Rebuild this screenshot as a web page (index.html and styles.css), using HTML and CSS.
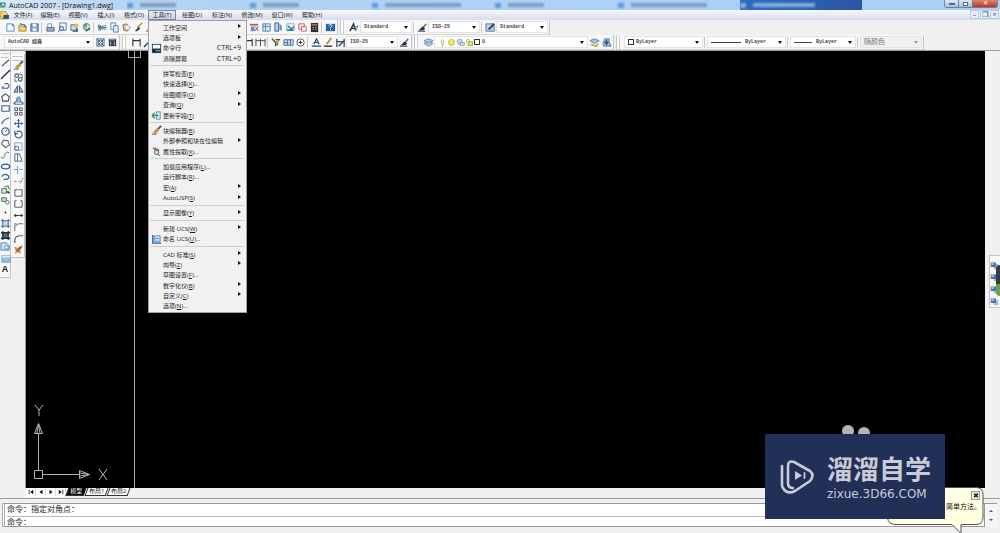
FILE: index.html
```html
<!DOCTYPE html>
<html lang="zh-CN">
<head>
<meta charset="utf-8">
<title>AutoCAD 2007 - [Drawing1.dwg]</title>
<link rel="stylesheet" href="styles.css">
</head>
<body>
<svg class="sprite" aria-hidden="true">
  <symbol id="new" viewBox="0 0 12 12"><path d="M2 2h6l2 2v6H2z" fill="#f4faff" stroke="#5f8fc0"/><path d="M8 2v2h2" fill="none" stroke="#335f90"/></symbol>
  <symbol id="open" viewBox="0 0 12 12"><path d="M2 4h3l1 1h4v5H2z" fill="#efd268" stroke="#b58b2b"/><path d="M3 2l5 1 2 3" fill="none" stroke="#3c79b9" stroke-width="1.5"/></symbol>
  <symbol id="save" viewBox="0 0 12 12"><path d="M2 2h8v8H2z" fill="#7fabd8" stroke="#2f6299"/><path d="M4 2h4v3H4zM4 7h4v3H4z" fill="#f3f8ff"/></symbol>
  <symbol id="print" viewBox="0 0 12 12"><path d="M3 2h4v4H3z" fill="#fff" stroke="#7994b4"/><path d="M2 6h8v4H2z" fill="#91add0" stroke="#526f96"/></symbol>
  <symbol id="preview" viewBox="0 0 12 12"><path d="M3 1h7v8H3z" fill="#eef6ff" stroke="#4778ad"/><circle cx="5" cy="7" r="2.2" fill="#cfe3fa" stroke="#335b88"/><path d="M3 9l-2 2" stroke="#335b88"/></symbol>
  <symbol id="publish" viewBox="0 0 12 12"><path d="M2 3h6v6H2z" fill="#c9dbef" stroke="#416e9f"/><circle cx="8" cy="4" r="2.5" fill="#e5bb55"/><path d="M4 10h5V7" fill="none" stroke="#285482" stroke-width="1.5"/></symbol>
  <symbol id="globe" viewBox="0 0 12 12"><circle cx="6" cy="5" r="4" fill="#58a277"/><path d="M2 4l4 2 1-4 3 3-3 4-2-2" fill="#c9ddef"/><path d="M5 10l5-3" stroke="#394f68" stroke-width="1.5"/></symbol>
  <symbol id="cut" viewBox="0 0 12 12"><path d="M1 6h10M3 5l7-1M4 7l6 1" stroke="#496f9b"/><circle cx="2.5" cy="4.5" r="1.2" fill="none" stroke="#355987"/><circle cx="3" cy="8" r="1.2" fill="none" stroke="#355987"/></symbol>
  <symbol id="copy" viewBox="0 0 12 12"><path d="M2 1h5v7H2z" fill="#fff" stroke="#4d80b5"/><path d="M5 4h5v7H5z" fill="#e1effd" stroke="#4d80b5"/></symbol>
  <symbol id="paste" viewBox="0 0 12 12"><path d="M2 3l4-1 4 4-3 4-4-1z" fill="#cbbf91" stroke="#807654"/><path d="M5 4h4v4H5z" fill="#edf5ff"/></symbol>
  <symbol id="brush" viewBox="0 0 12 12"><path d="M10 1L5 6" stroke="#d8a63b" stroke-width="2"/><path d="M6 5L2 10h3l3-3z" fill="#454e58"/></symbol>
  <symbol id="undo" viewBox="0 0 12 12"><path d="M2 5h6q3 2 0 4M2 5l3-3M2 5l3 3" fill="none" stroke="#2d62a0"/></symbol>
  <symbol id="props" viewBox="0 0 12 12"><path d="M2 2h8v8H2z" fill="#dceafa" stroke="#4f7fae"/><path d="M2 5h8M5 2v8" stroke="#4f7fae"/></symbol>
  <symbol id="center" viewBox="0 0 12 12"><path d="M1 2h9v2H1z" fill="#c15b66"/><path d="M2 5h4v5H2z" fill="#5a91c6"/><path d="M6 10l4-5M7 5l3 5" stroke="#853b70"/></symbol>
  <symbol id="palette" viewBox="0 0 12 12"><path d="M2 1h4v9H2z" fill="#b7d4ee" stroke="#376695"/><path d="M7 2q3 1 3 7H7z" fill="#6897c3"/></symbol>
  <symbol id="sheet" viewBox="0 0 12 12"><path d="M2 2h8v7H2z" fill="#f3fbff" stroke="#77a6be"/><path d="M3 4l4 4 3-3M2 9h7" fill="none" stroke="#247799" stroke-width="1.5"/></symbol>
  <symbol id="markup" viewBox="0 0 12 12"><path d="M2 2h6v6H2z" fill="#fbe9e9" stroke="#c65e65"/><path d="M5 5h5v5H5z" fill="#fff" stroke="#bd5962"/></symbol>
  <symbol id="calc" viewBox="0 0 12 12"><path d="M2 1h8v10H2z" fill="#342d2f"/><path d="M3 2h6v2H3z" fill="#b9675c"/><path d="M4 6h1m2 0h1M4 8h1m2 0h1" stroke="#eee"/></symbol>
  <symbol id="help" viewBox="0 0 12 12"><path d="M1 2h10v8H1z" fill="#2467a1"/><path d="M4 4q3-3 4 0L6 6v1M6 8v1" fill="none" stroke="#fff"/></symbol>
  <symbol id="astyle" viewBox="0 0 12 12"><path d="M1 10L5 2l2 7M2 7h5" fill="none" stroke="#263440" stroke-width="1.5"/><path d="M6 6l4-2-3 6" fill="none" stroke="#5c7590"/></symbol>
  <symbol id="dstyle" viewBox="0 0 12 12"><path d="M1 10h8M10 2L6 7" fill="none" stroke="#40576c" stroke-width="1.4"/><path d="M6 5L2 9h5l2-2z" fill="#263544"/></symbol>
  <symbol id="tstyle" viewBox="0 0 12 12"><path d="M1 2h9v8H1z" fill="#bdd3e9" stroke="#507698"/><path d="M10 2L4 8" stroke="#263f5d" stroke-width="2"/></symbol>
  <symbol id="gear" viewBox="0 0 12 12"><path d="M2 2h8v8H2z" fill="#c3d8ec" stroke="#577895"/><circle cx="6" cy="6" r="2.5" fill="#fff" stroke="#43566a"/><path d="M2 2l8 8M2 10l8-8" stroke="#526c87"/></symbol>
  <symbol id="darkset" viewBox="0 0 12 12"><path d="M2 2h8v8H2z" fill="#343d48"/><path d="M3 3h6M4 5v4M8 5v4" stroke="#aabac8"/></symbol>
  <symbol id="dim" viewBox="0 0 12 12"><path d="M2 2v8M10 2v8M2 4h8" fill="none" stroke="#333" stroke-width="1.2"/></symbol>
  <symbol id="dimcont" viewBox="0 0 12 12"><path d="M1 2v8M6 2v8M11 2v8M1 4h10" stroke="#344252" fill="none"/></symbol>
  <symbol id="leader" viewBox="0 0 12 12"><path d="M1 2l4 4v4M5 3h5M7 3v6" stroke="#434d43" stroke-width="1.5" fill="none"/><circle cx="7" cy="5" r="2" fill="#c9ad44"/></symbol>
  <symbol id="tol" viewBox="0 0 12 12"><path d="M1 3h10v6H1z" fill="#c9e0f4" stroke="#3b6a9c"/><path d="M5 3v6M8 3v6M1 6h4" stroke="#3b6a9c"/></symbol>
  <symbol id="target" viewBox="0 0 12 12"><circle cx="6" cy="6" r="4" fill="#fff" stroke="#555"/><path d="M6 4v4M4 6h4" stroke="#222"/></symbol>
  <symbol id="dimedit" viewBox="0 0 12 12"><path d="M3 8l3-6 3 6M4 6h4M1 10h10" fill="none" stroke="#234876" stroke-width="1.3"/></symbol>
  <symbol id="dimtext" viewBox="0 0 12 12"><path d="M1 10h9" stroke="#333" stroke-width="1.5"/><path d="M9 1L4 8" stroke="#b28d3b" stroke-width="2"/></symbol>
  <symbol id="dimupd" viewBox="0 0 12 12"><path d="M2 2v9M10 2v9M2 5h8" fill="none" stroke="#234876" stroke-width="1.3"/><path d="M10 4L4 10" stroke="#444" stroke-width="1.5"/></symbol>
  <symbol id="layers" viewBox="0 0 12 12"><path d="M1 4l5-2 5 2-5 3zM1 7l5 3 5-3-5-2z" fill="#b9cfe7" stroke="#688fb6"/></symbol>
  <symbol id="bulb" viewBox="0 0 12 12"><path d="M5 9V7q-3-3 1-5 4 2 1 5v2z" fill="#fff9b5" stroke="#b3a44e"/><path d="M5 11h2" stroke="#888"/></symbol>
  <symbol id="sun" viewBox="0 0 12 12"><circle cx="6" cy="6" r="4" fill="#f5ee58" stroke="#a5a144"/></symbol>
  <symbol id="freeze" viewBox="0 0 12 12"><circle cx="5" cy="5" r="3.5" fill="#bdd8ef" stroke="#7697b8"/><path d="M6 6h5v4H6z" fill="#dce5ee" stroke="#7889a0"/></symbol>
  <symbol id="lock" viewBox="0 0 12 12"><path d="M2 6V3q2-3 4 0v3" fill="none" stroke="#9fae31"/><path d="M4 5h6v5H4z" fill="#e9e654" stroke="#929a36"/></symbol>
  <symbol id="layprev" viewBox="0 0 12 12"><path d="M1 4l5-2 5 2-5 3z" fill="#a6c4dc" stroke="#607f9f"/><path d="M2 8l6 2 2-3" fill="none" stroke="#c0b23e" stroke-width="2"/></symbol>
  <symbol id="laystate" viewBox="0 0 12 12"><path d="M4 2h5v3l2 5H3L2 7z" fill="#9fbbdb" stroke="#607fa6"/><path d="M6 3v4M4 5l2 3 2-3" fill="none" stroke="#245b92" stroke-width="1.5"/></symbol>

  <symbol id="line" viewBox="0 0 12 12"><path d="M2 10l8-7" stroke="#3b5069" stroke-width="1.2"/></symbol>
  <symbol id="xline" viewBox="0 0 12 12"><path d="M1 11L11 1" stroke="#24364c" stroke-width="1.5"/></symbol>
  <symbol id="pline" viewBox="0 0 12 12"><path d="M2 9h6q4-3 0-5H5M2 9l2-2" fill="none" stroke="#356596" stroke-width="1.2"/></symbol>
  <symbol id="poly" viewBox="0 0 12 12"><path d="M6 2l4 3-1 5H3L2 5z" fill="none" stroke="#49515b" stroke-width="1.2"/></symbol>
  <symbol id="rect" viewBox="0 0 12 12"><path d="M2 3h8v6H2z" fill="none" stroke="#41678e" stroke-width="1.2"/></symbol>
  <symbol id="arc" viewBox="0 0 12 12"><path d="M2 10q1-5 8-7" fill="none" stroke="#315d8b" stroke-width="1.3"/></symbol>
  <symbol id="circle" viewBox="0 0 12 12"><circle cx="6" cy="6" r="4" fill="none" stroke="#38618e" stroke-width="1.3"/><path d="M6 6l2-2" stroke="#333"/></symbol>
  <symbol id="cloud" viewBox="0 0 12 12"><path d="M3 8q-3-2 0-3 0-4 3-2 4-1 3 2 3 3-1 4-2 3-3 0z" fill="none" stroke="#5b6574" stroke-width="1.2"/></symbol>
  <symbol id="spline" viewBox="0 0 12 12"><path d="M1 9q3 3 4-2t5-3" fill="none" stroke="#566272"/></symbol>
  <symbol id="ellipse" viewBox="0 0 12 12"><ellipse cx="6" cy="6" rx="4.5" ry="2.6" fill="none" stroke="#275c98" stroke-width="1.3"/></symbol>
  <symbol id="earc" viewBox="0 0 12 12"><path d="M2 5q3-4 7-1 2 3-2 4H4" fill="none" stroke="#275c98" stroke-width="1.3"/></symbol>
  <symbol id="insert" viewBox="0 0 12 12"><path d="M2 5h5v5H2zM5 3l4-1 1 4" fill="#d8eadd" stroke="#417557"/><path d="M8 8l2 2" stroke="#222" stroke-width="2"/></symbol>
  <symbol id="block" viewBox="0 0 12 12"><path d="M2 3h5v4H2z" fill="#cae4c6" stroke="#3d7349"/><circle cx="8" cy="8" r="2" fill="#fff" stroke="#3d7349"/></symbol>
  <symbol id="point" viewBox="0 0 12 12"><circle cx="6" cy="6" r="1" fill="#222"/></symbol>
  <symbol id="hatch" viewBox="0 0 12 12"><path d="M3 3h6v6H3z" fill="#cfe3f6"/><path d="M1 3h10M1 9h10M3 1v10M9 1v10" stroke="#3e70a4" stroke-width="1.2"/><path d="M3 7l4-4M5 9l4-4" stroke="#8fb4d9"/></symbol>
  <symbol id="gradient" viewBox="0 0 12 12"><path d="M3 3h6v6H3z" fill="#4a6b86"/><path d="M1 3h10M1 9h10M3 1v10M9 1v10" stroke="#22303c" stroke-width="1.4"/></symbol>
  <symbol id="region" viewBox="0 0 12 12"><path d="M1 2h6l3 3v5H1z" fill="#cfe2f5" stroke="#4c7fb2"/><circle cx="7" cy="7" r="2" fill="#fff" stroke="#4c7fb2"/></symbol>
  <symbol id="table" viewBox="0 0 12 12"><path d="M2 3h9v7H2z" fill="#9dbce2" stroke="#7395be"/><path d="M2 3h9v2H2z" fill="#d9e9fb"/></symbol>

  <symbol id="erase" viewBox="0 0 12 12"><path d="M11 1L7 5" stroke="#555" stroke-width="2"/><path d="M7 3L2 8l3 2 4-4z" fill="#c49d46"/><path d="M1 10h5" stroke="#555"/></symbol>
  <symbol id="dup" viewBox="0 0 12 12"><circle cx="4" cy="4" r="2" fill="none" stroke="#35577b" stroke-width="1.2"/><circle cx="8" cy="8" r="2" fill="none" stroke="#35577b" stroke-width="1.2"/><path d="M6 2l4 1v3M2 7v3h3" fill="none" stroke="#526679"/></symbol>
  <symbol id="mirror" viewBox="0 0 12 12"><path d="M5 3v7H1zM7 3v7h4z" fill="#a9c5e1" stroke="#35577b"/></symbol>
  <symbol id="offset" viewBox="0 0 12 12"><path d="M1 10V8l3-1V4q2-4 4 0v3l3 1v2z" fill="#8eb5de" stroke="#456f9e"/><path d="M3 9h6" stroke="#e8f4ff"/></symbol>
  <symbol id="array" viewBox="0 0 12 12"><path d="M2 2h3v3H2zM7 2h3v3H7zM2 7h3v3H2zM7 7h3v3H7z" fill="none" stroke="#3f4f62"/></symbol>
  <symbol id="move" viewBox="0 0 12 12"><path d="M2 6h8M6 2v8" stroke="#2e66a3" stroke-width="1.3"/><path d="M6 1L4 3h4zM6 11L4 9h4zM1 6l2-2v4zM11 6L9 4v4z" fill="#2e66a3"/></symbol>
  <symbol id="rotate" viewBox="0 0 12 12"><path d="M4 3q5-2 6 2 0 5-4 5-5-1-3-6M2 2v3h3" fill="none" stroke="#325985" stroke-width="1.2"/></symbol>
  <symbol id="scale" viewBox="0 0 12 12"><path d="M2 2h8v8H2z" fill="#eef6ff" stroke="#7ba4cd"/><path d="M2 6h4v4H2z" fill="none" stroke="#54789d"/></symbol>
  <symbol id="stretch" viewBox="0 0 12 12"><path d="M2 2h3v8H2zM5 2h2l3 8H5" fill="none" stroke="#4c6179"/></symbol>
  <symbol id="trim" viewBox="0 0 12 12"><path d="M1 6h4M7 6h4M5 2v9" stroke="#679bc8"/></symbol>
  <symbol id="extend" viewBox="0 0 12 12"><path d="M1 7h3M6 7h2M8 9l3-6" stroke="#738da8"/></symbol>
  <symbol id="break" viewBox="0 0 12 12"><path d="M2 3h8v7H2z" fill="none" stroke="#465365"/><path d="M5 3h2" stroke="#ccd"/></symbol>
  <symbol id="break2" viewBox="0 0 12 12"><path d="M4 3H2v7h8V3H8" fill="none" stroke="#3e546b"/></symbol>
  <symbol id="join" viewBox="0 0 12 12"><path d="M1 6h10" stroke="#333"/><path d="M2 4l3 2-3 2zM10 4L7 6l3 2z" fill="#314355"/></symbol>
  <symbol id="chamfer" viewBox="0 0 12 12"><path d="M2 11V6l4-3h5M2 5V3h2" fill="none" stroke="#526a83"/></symbol>
  <symbol id="fillet" viewBox="0 0 12 12"><path d="M2 11V8q0-5 6-5h3" fill="none" stroke="#31618f" stroke-width="1.3"/></symbol>
  <symbol id="explode" viewBox="0 0 12 12"><path d="M1 3l4 1 6-3-2 4-1 3-3 1-3 2 1-4z" fill="#db894c"/><path d="M4 8l5-5M6 8l2 2" stroke="#8f432d" stroke-width="1.2"/></symbol>
  <symbol id="cmdwin" viewBox="0 0 12 12"><path d="M1 1h10v10H1z" fill="#174b86"/><path d="M2 2h8v4H2z" fill="#fff"/><path d="M2 7h8v3H2z" fill="#152026"/><path d="M5 8h5v1H5z" fill="#e0da7a"/></symbol>
  <symbol id="field" viewBox="0 0 12 12"><path d="M6 2h4v8H6z" fill="#e6f2fb" stroke="#4a91b5"/><path d="M1 6h7M1 6l3-3M1 6l3 3" stroke="#2c9a67" stroke-width="1.4" fill="none"/></symbol>
  <symbol id="extract" viewBox="0 0 12 12"><path d="M2 2l6 5M4 2l5 3" stroke="#b35f75" stroke-width="1.5"/><circle cx="6" cy="7" r="2.5" fill="#c7d6e5" stroke="#556a82"/><path d="M8 9l2 2" stroke="#333"/></symbol>
  <symbol id="ucs" viewBox="0 0 12 12"><path d="M2 1v9h9" fill="none" stroke="#205f9e" stroke-width="1.5"/><path d="M4 2h6v6H4z" fill="#d9eafb" stroke="#4686c1"/><path d="M5 5h4" stroke="#4686c1"/></symbol>
  <symbol id="cube" viewBox="0 0 12 12"><path d="M5 4h6v7H5z" fill="#9dbce0"/><path d="M1 2h7v6H1z" fill="#4a74a6"/><path d="M2 3h3v2H2z" fill="#c4dcf2"/></symbol>
</svg>

<header class="titlebar">
  <svg class="appicon" viewBox="0 0 12 12"><path d="M0 1h11v10H0z" fill="#2f8a77"/><path d="M2 9l4-6 3 6" fill="none" stroke="#e6f5ef" stroke-width="2"/></svg>
  <h1 class="title">AutoCAD 2007 - [Drawing1.dwg]</h1>
  <div class="ghosts" aria-hidden="true">
    <span class="ghost"><i></i><b></b></span><span class="ghost"><i></i><b></b></span><span class="ghost"><i></i><b class="long"></b></span><span class="ghost"><i></i><b></b></span><span class="ghost"><i></i><b class="long"></b></span><span class="ghost active"><i></i><b></b></span>
  </div>
  <div class="winbtns"><button aria-label="最小化"><i class="dash"></i></button><button aria-label="还原"><i class="box"></i></button><button class="close" aria-label="关闭">✕</button></div>
</header>

<nav class="menubar">
  <svg class="docicon" viewBox="0 0 12 12"><path d="M1 1h6l3 3v7H1z" fill="#f3d660" stroke="#a98b2f"/><path d="M5 6h7v5H4z" fill="#31517c"/></svg>
  <button>文件(F)</button><button>编辑(E)</button><button>视图(V)</button><button>插入(I)</button><button>格式(O)</button>
  <div class="menuhost">
    <button class="open" aria-expanded="true">工具(T)</button>
    <div class="menu" role="menu">
      <button class="sub">工作空间</button>
      <button class="sub">选项板</button>
      <button><svg><use href="#cmdwin"/></svg>命令行<kbd>CTRL+9</kbd></button>
      <button>清除屏幕<kbd>CTRL+0</kbd></button>
      <hr>
      <button>拼写检查(<u>E</u>)</button>
      <button>快速选择(<u>K</u>)...</button>
      <button class="sub">绘图顺序(<u>O</u>)</button>
      <button class="sub">查询(<u>Q</u>)</button>
      <button><svg><use href="#field"/></svg>更新字段(<u>T</u>)</button>
      <hr>
      <button><svg><use href="#erase"/></svg>块编辑器(<u>B</u>)</button>
      <button class="sub">外部参照和块在位编辑</button>
      <button><svg><use href="#extract"/></svg>属性提取(<u>X</u>)...</button>
      <hr>
      <button>加载应用程序(<u>L</u>)...</button>
      <button>运行脚本(<u>R</u>)...</button>
      <button class="sub">宏(<u>A</u>)</button>
      <button class="sub">AutoLISP(<u>S</u>)</button>
      <hr>
      <button class="sub">显示图像(<u>Y</u>)</button>
      <hr>
      <button class="sub">新建 UCS(<u>W</u>)</button>
      <button><svg><use href="#ucs"/></svg>命名 UCS(<u>U</u>)...</button>
      <hr>
      <button class="sub">CAD 标准(<u>S</u>)</button>
      <button class="sub">向导(<u>Z</u>)</button>
      <button>草图设置(<u>F</u>)...</button>
      <button class="sub">数字化仪(<u>B</u>)</button>
      <button class="sub">自定义(<u>C</u>)</button>
      <button>选项(<u>N</u>)...</button>
    </div>
  </div>
  <button>绘图(D)</button><button>标注(N)</button><button>修改(M)</button><button>窗口(W)</button><button>帮助(H)</button>
  <div class="docbtns"><button aria-label="最小化文档">–</button><button aria-label="还原文档">❐</button><button aria-label="关闭文档">×</button></div>
</nav>

<div class="toolrow">
  <div class="bar">
    <button class="tool" aria-label="新建"><svg><use href="#new"/></svg></button><button class="tool" aria-label="打开"><svg><use href="#open"/></svg></button><button class="tool" aria-label="保存"><svg><use href="#save"/></svg></button><i class="sep"></i>
    <button class="tool" aria-label="打印"><svg><use href="#print"/></svg></button><button class="tool" aria-label="打印预览"><svg><use href="#preview"/></svg></button><button class="tool" aria-label="发布"><svg><use href="#publish"/></svg></button><button class="tool" aria-label="三维发布"><svg><use href="#globe"/></svg></button><i class="sep"></i>
    <button class="tool" aria-label="剪切"><svg><use href="#cut"/></svg></button><button class="tool" aria-label="复制"><svg><use href="#copy"/></svg></button><button class="tool" aria-label="粘贴"><svg><use href="#paste"/></svg></button><button class="tool" aria-label="特性匹配"><svg><use href="#brush"/></svg></button>
    <button class="tool" aria-label="块编辑器"><svg><use href="#erase"/></svg></button><i class="sep"></i>
    <button class="tool" aria-label="放弃"><svg><use href="#undo"/></svg></button><button class="tool" aria-label="平移"><svg><use href="#move"/></svg></button><button class="tool" aria-label="缩放"><svg><use href="#preview"/></svg></button><i class="sep"></i>
    <button class="tool" aria-label="窗口缩放"><svg><use href="#preview"/></svg></button><button class="tool" aria-label="缩放上一个"><svg><use href="#preview"/></svg></button><button class="tool" aria-label="重画"><svg><use href="#rotate"/></svg></button><button class="tool" aria-label="重生成"><svg><use href="#rotate"/></svg></button>
    <button class="tool" aria-label="特性"><svg><use href="#center"/></svg></button><button class="tool" aria-label="设计中心"><svg><use href="#props"/></svg></button><button class="tool" aria-label="工具选项板"><svg><use href="#palette"/></svg></button><button class="tool" aria-label="图纸集"><svg><use href="#sheet"/></svg></button><button class="tool" aria-label="标记集"><svg><use href="#markup"/></svg></button><button class="tool" aria-label="计算器"><svg><use href="#calc"/></svg></button><i class="sep"></i>
    <button class="tool" aria-label="帮助"><svg><use href="#help"/></svg></button>
  </div>
  <div class="bar grip">
    <button class="tool" aria-label="文字样式"><svg><use href="#astyle"/></svg></button>
    <label class="combo w52"><select aria-label="文字样式"><option>Standard</option></select></label><i class="sep"></i>
    <button class="tool" aria-label="标注样式"><svg><use href="#dstyle"/></svg></button>
    <label class="combo w52"><select aria-label="标注样式"><option>ISO-25</option></select></label><i class="sep"></i>
    <button class="tool" aria-label="表格样式"><svg><use href="#tstyle"/></svg></button>
    <label class="combo w52"><select aria-label="表格样式"><option>Standard</option></select></label>
  </div>
</div>

<div class="toolrow">
  <div class="bar work">
    <label class="combo w92"><select aria-label="工作空间"><option>AutoCAD 经典</option></select></label>
    <button class="tool" aria-label="工作空间设置"><svg><use href="#gear"/></svg></button><button class="tool" aria-label="我的工作空间"><svg><use href="#darkset"/></svg></button>
  </div>
  <div class="bar grip">
    <button class="tool" aria-label="线性"><svg><use href="#dim"/></svg></button><button class="tool" aria-label="对齐"><svg><use href="#xline"/></svg></button><button class="tool" aria-label="弧长"><svg><use href="#arc"/></svg></button><button class="tool" aria-label="坐标"><svg><use href="#dim"/></svg></button><button class="tool" aria-label="半径"><svg><use href="#circle"/></svg></button><button class="tool" aria-label="折弯"><svg><use href="#pline"/></svg></button><button class="tool" aria-label="直径"><svg><use href="#circle"/></svg></button><button class="tool" aria-label="角度"><svg><use href="#line"/></svg></button><button class="tool" aria-label="快速标注"><svg><use href="#dim"/></svg></button>
    <i class="sep"></i><button class="tool" aria-label="基线"><svg><use href="#dim"/></svg></button><button class="tool" aria-label="连续"><svg><use href="#dimcont"/></svg></button><i class="sep"></i>
    <button class="tool" aria-label="引线"><svg><use href="#leader"/></svg></button><button class="tool" aria-label="公差"><svg><use href="#tol"/></svg></button><button class="tool" aria-label="圆心标记"><svg><use href="#target"/></svg></button><i class="sep"></i>
    <button class="tool" aria-label="编辑标注"><svg><use href="#dimedit"/></svg></button><button class="tool" aria-label="编辑标注文字"><svg><use href="#dimtext"/></svg></button><button class="tool" aria-label="标注更新"><svg><use href="#dimupd"/></svg></button>
    <label class="combo w52"><select aria-label="当前标注样式"><option>ISO-25</option></select></label>
    <button class="tool" aria-label="样式管理"><svg><use href="#dstyle"/></svg></button>
  </div>
  <div class="bar grip">
    <button class="tool" aria-label="图层特性"><svg><use href="#layers"/></svg></button>
    <label class="combo w156 layer"><svg><use href="#bulb"/></svg><svg><use href="#sun"/></svg><svg><use href="#freeze"/></svg><svg><use href="#lock"/></svg><i class="swatch"></i><select aria-label="图层"><option>0</option></select></label>
    <button class="tool" aria-label="置为当前"><svg><use href="#layprev"/></svg></button><button class="tool" aria-label="上一个图层"><svg><use href="#laystate"/></svg></button>
  </div>
  <div class="bar grip">
    <label class="combo w80"><i class="swatch"></i><select aria-label="颜色"><option>ByLayer</option></select></label><i class="sep"></i>
    <label class="combo w80"><i class="rule wide"></i><select aria-label="线型"><option>ByLayer</option></select></label><i class="sep"></i>
    <label class="combo w66"><i class="rule"></i><select aria-label="线宽"><option>ByLayer</option></select></label><i class="sep"></i>
    <label class="combo w62 off"><select aria-label="打印样式" disabled><option>随颜色</option></select></label>
  </div>
</div>

<main class="work-area">
  <aside class="side">
    <div class="strip draw">
      <button aria-label="直线"><svg><use href="#line"/></svg></button><button aria-label="构造线"><svg><use href="#xline"/></svg></button><button aria-label="多段线"><svg><use href="#pline"/></svg></button><button aria-label="正多边形"><svg><use href="#poly"/></svg></button><button aria-label="矩形"><svg><use href="#rect"/></svg></button><button aria-label="圆弧"><svg><use href="#arc"/></svg></button><button aria-label="圆"><svg><use href="#circle"/></svg></button><button aria-label="修订云线"><svg><use href="#cloud"/></svg></button><button aria-label="样条曲线"><svg><use href="#spline"/></svg></button><button aria-label="椭圆"><svg><use href="#ellipse"/></svg></button><button aria-label="椭圆弧"><svg><use href="#earc"/></svg></button><button aria-label="插入块"><svg><use href="#insert"/></svg></button><button aria-label="创建块"><svg><use href="#block"/></svg></button><button aria-label="点"><svg><use href="#point"/></svg></button><button aria-label="图案填充"><svg><use href="#hatch"/></svg></button><button aria-label="渐变色"><svg><use href="#gradient"/></svg></button><button aria-label="面域"><svg><use href="#region"/></svg></button><button aria-label="表格"><svg><use href="#table"/></svg></button><button class="letter" aria-label="多行文字">A</button>
    </div>
    <div class="strip modify">
      <button aria-label="删除"><svg><use href="#erase"/></svg></button><button aria-label="复制对象"><svg><use href="#dup"/></svg></button><button aria-label="镜像"><svg><use href="#mirror"/></svg></button><button aria-label="偏移"><svg><use href="#offset"/></svg></button><button aria-label="阵列"><svg><use href="#array"/></svg></button><button aria-label="移动"><svg><use href="#move"/></svg></button><button aria-label="旋转"><svg><use href="#rotate"/></svg></button><button aria-label="缩放对象"><svg><use href="#scale"/></svg></button><button aria-label="拉伸"><svg><use href="#stretch"/></svg></button><button aria-label="修剪"><svg><use href="#trim"/></svg></button><button aria-label="延伸"><svg><use href="#extend"/></svg></button><button aria-label="打断于点"><svg><use href="#break"/></svg></button><button aria-label="打断"><svg><use href="#break2"/></svg></button><button aria-label="合并"><svg><use href="#join"/></svg></button><button aria-label="倒角"><svg><use href="#chamfer"/></svg></button><button aria-label="圆角"><svg><use href="#fillet"/></svg></button><button aria-label="分解"><svg><use href="#explode"/></svg></button>
    </div>
  </aside>
  <section class="canvas">
    <i class="crosshair"></i><i class="pickbox"></i>
    <svg class="axes" viewBox="0 0 80 80" fill="none" stroke="#b5b5b5"><path d="M4.500 66.500h8v8h-8zM8.500 66V29M13 70.500h36M8.500 19.500l-4 10h8zM7 29l1.500-9 1.500 9M59.500 70.500l-10-4v8zM50 69l9 1.500-9 1.500"/><path d="M5 1l4 5 4-5M9 6v6M69 65l8 11M77 65l-8 11"/></svg>
    <div class="eyes" aria-hidden="true"><i></i><i></i></div>
  </section>
  <aside class="dock"><div class="dockbar"><button aria-label="视图一"><svg><use href="#cube"/></svg></button><button aria-label="视图二"><svg><use href="#cube"/></svg></button><button aria-label="视图三"><svg><use href="#cube"/></svg></button><button aria-label="视图四"><svg><use href="#cube"/></svg></button><i class="gauge"></i></div></aside>
</main>

<div class="layouts">
  <div class="pager"><button aria-label="第一个"><svg viewBox="0 0 8 8"><path d="M1 1h1v6H1zM7 1v6L3 4z"/></svg></button><button aria-label="前一个"><svg viewBox="0 0 8 8"><path d="M6 1v6L2 4z"/></svg></button><button aria-label="后一个"><svg viewBox="0 0 8 8"><path d="M2 1v6l4-3z"/></svg></button><button aria-label="最后一个"><svg viewBox="0 0 8 8"><path d="M1 1v6l4-3zM6 1h1v6H6z"/></svg></button></div>
  <button class="tab on"><span>模型</span></button><button class="tab"><span>布局1</span></button><button class="tab"><span>布局2</span></button>
</div>

<footer class="command">
  <div class="lines"><p>命令：指定对角点：</p><label class="prompt">命令：<input type="text" aria-label="命令输入"></label></div>
  <div class="spin"><button aria-label="向上滚动"><i class="up"></i></button><button aria-label="向下滚动"><i class="down"></i></button></div>
</footer>

<div class="balloon">
  <svg class="shape" viewBox="0 0 98 47"><path d="M9 .5h80q7 0 7 7v23q0 7-7 7H74v9L65 37.500H9q-8 0-8.500-7v-23q0-7 8.500-7z" fill="#ffffe1" stroke="#55554a"/></svg>
  <button aria-label="关闭提示">✖</button><p>简单方法。</p>
</div>
<div class="brand">
  <svg class="mark" viewBox="0 0 36 38" fill="none" stroke="#c9ccd6" stroke-width="2.600" stroke-linecap="round" stroke-linejoin="round"><path d="M13 30q-5 0-5-5V8q0-6 6-4l16 9q5 4 0 10L15 33q-8 4-12-3-1-1-1-3V8"/><path d="M15 13l7 4.500-7 4.500z" fill="#c9ccd6" stroke="none"/><path d="M24.500 15v5" stroke-width="1.800"/></svg>
  <div class="words"><strong>溜溜自学</strong><span>zixue.3D66.COM</span></div>
</div>
</body>
</html>
```
FILE: styles.css
```css
* { box-sizing: border-box; }
html, body { height: 100%; }
body {
  margin: 0;
  display: flex;
  flex-direction: column;
  overflow: hidden;
  position: relative;
  background: #f0f0f0;
  color: #222;
  font: 6px/10px "Open Sans", "Noto Sans CJK SC", sans-serif;
}
button, select, input { font: inherit; color: inherit; margin: 0; padding: 0; border: 0; background: none; border-radius: 0; }
button { display: block; white-space: nowrap; }
p, h1 { margin: 0; }
svg { display: block; flex: none; width: 11px; height: 11px; }
.sprite { position: absolute; width: 0; height: 0; }

/* title bar */
.titlebar {
  flex: none; height: 10px; display: flex; align-items: center; position: relative;
  background: linear-gradient(90deg, #d7e8f8 0, #b4d3f4 130px, #a9cff8 100%);
}
.appicon { width: 6px; height: 8px; }
.title { font-size: 7px; line-height: 9px; font-weight: 400; color: #111; padding-left: 3px; width: 121px; white-space: nowrap; }
.ghosts { flex: 1; display: grid; grid-template-columns: repeat(6, 1fr); height: 10px; overflow: hidden; }
.ghost { display: flex; align-items: center; gap: 7px; margin-right: 1px; }
.ghost i { width: 6px; height: 5px; background: #5b9be0; filter: blur(1px); }
.ghost b { width: 36px; height: 4px; background: #7d9dbf; filter: blur(1px); }
.ghost b.long { width: 76px; }
.ghost.active { background: linear-gradient(90deg, #2d6cbf, #2c55a3); }
.ghost.active i, .ghost.active b { background: #83b0df; }
.ghost.active b { width: 62px; }
.winbtns { display: flex; align-self: flex-start; height: 8px; margin: 0 2px 0 81px; border: 1px solid #6e8299; border-top: 0; border-radius: 0 0 3px 3px; overflow: hidden; }
.winbtns button { width: 14px; height: 7px; display: grid; place-items: center; background: linear-gradient(#dce9f6, #a9bfd7); border-right: 1px solid #6e8299; font-size: 6px; line-height: 7px; }
.winbtns .close { width: 24px; color: #fff; background: linear-gradient(#dc8a72, #bf3220); border: 0; }
.dash { width: 6px; height: 2px; background: #fff; border: 1px solid #57677a; }
.box { width: 5px; height: 4px; background: #fff; border: 1px solid #57677a; }

/* menu bar */
.menubar { flex: none; height: 10px; display: flex; align-items: stretch; background: linear-gradient(#f8f9fd, #d5dcec); }
.docicon { width: 9px; height: 10px; margin: 0 1px 0 0; }
.menubar > button, .menuhost > .open { width: 28px; height: 10px; line-height: 10px; text-align: center; }
.menubar > .docicon + button { width: 26px; }
.menuhost { position: relative; width: 28px; margin: 0 1px 0 0; }
.menuhost > .open { border: 1px solid #7c8798; line-height: 8px; background: linear-gradient(#e6eaf4, #ccd3e4); }
.menubar > .menuhost ~ button { width: 30px; }
.docbtns { display: flex; gap: 1px; margin-left: auto; padding-right: 1px; }
.docbtns button { width: 9px; height: 9px; line-height: 8px; font-size: 7px; color: #44536c; background: #e6edf8; border: 1px solid #bcc9dc; }
.menu {
  position: absolute; z-index: 5; top: 10px; left: 0; width: 99px; height: 293px;
  display: flex; flex-direction: column; padding: 1px;
  background: #f1f1f1; border: 1px solid #a0a0a0;
}
.menu button { flex: 1; min-height: 0; display: flex; align-items: center; position: relative; padding: 1px 4px 0 13px; text-align: left; color: #1c1c1c; }
.menu svg { position: absolute; left: 1px; }
.menu kbd { margin-left: auto; font: inherit; font-size: 7px; }
.menu hr { width: 94px; height: 1px; margin: 2px 0; border: 0; background: #cfcfcf; }
.menu .sub::after { content: ""; margin-left: auto; margin-bottom: 3px; border: 2px solid transparent; border-left: 3px solid #111; border-right: 0; }
.menu u { text-underline-offset: 1px; }

/* toolbars */
.toolrow { flex: none; display: flex; height: 15px; align-items: stretch; }
.toolrow + .toolrow { height: 16px; border-bottom: 1px solid #9b9b9b; }
.bar { display: flex; align-items: center; padding: 0 1px 0 4px; border-right: 1px solid #c4c4c4; border-bottom: 1px solid #d4d4d4; background: #f7f7f7; }
.bar.work { width: 120px; }
.bar.grip { padding-left: 7px; margin-left: 2px; border-left: 1px solid #c4c4c4; box-shadow: inset 2px 0 #fff, inset 3px 0 #cfcfcf; }
.tool { width: 12px; height: 12px; flex: none; display: grid; place-items: center; }
.sep { flex: none; width: 1px; height: 11px; margin: 0 2px 0 1px; background: #c9c9c9; }
.combo { display: flex; align-items: center; position: relative; height: 12px; background: #fff; border: 1px solid #e3e3e3; padding-left: 3px; font: bold 5px/10px "Liberation Mono", "Noto Sans CJK SC", monospace; }
.combo select { appearance: none; flex: 1; min-width: 0; height: 10px; color: #444; opacity: 1; }
.combo::after { content: ""; position: absolute; right: 3px; top: 4px; border: 2px solid transparent; border-top: 3px solid #111; border-bottom: 0; pointer-events: none; }
.w52 { width: 52px; }
.w92 { width: 92px; }
.w156 { width: 154px; }
.w80 { width: 79px; }
.w66 { width: 66px; }
.w62 { width: 62px; }
.layer svg { width: 9px; height: 9px; }
.swatch { width: 6px; height: 6px; border: 1px solid #333; background: #fff; margin-right: 2px; flex: none; }
.rule { width: 18px; height: 1px; background: #444; margin-right: 4px; flex: none; }
.rule.wide { width: 30px; }
.off { background: #f0f0f0; }
.off select { color: #777; font-size: 7px; font-weight: 400; }
.off::after { border-top-color: #999; }

/* drawing area */
.work-area { flex: 1; min-height: 0; display: flex; }
.side { flex: none; width: 26px; display: flex; align-items: flex-start; border-right: 1px solid #999; }
.strip { display: grid; justify-items: center; background: #f8f8f8; border-right: 1px solid #c2c2c2; border-bottom: 1px solid #c2c2c2; position: relative; }
.strip::before { content: ""; position: absolute; left: 1px; right: 1px; top: 2px; height: 3px; border: 1px solid #c4c4c4; border-width: 1px 0; }
.strip button { width: 10px; display: grid; place-items: center; }
.draw { width: 11px; padding: 6px 2px 2px 0; grid-template-rows: repeat(9, 11px 12px) 11px; }
.modify { width: 14px; margin-top: 3px; padding: 6px 1px 2px; grid-template-rows: repeat(8, 11px 12px) 11px; }
.strip .letter { font: bold 9px/11px "Liberation Sans", sans-serif; color: #222; }
.canvas { flex: 1; position: relative; background: #000; overflow: hidden; }
.crosshair { position: absolute; left: 108px; top: 0; bottom: 0; width: 1px; background: #a8a8a8; }
.pickbox { position: absolute; left: 102px; top: -6px; width: 13px; height: 13px; border: 1px solid #a8a8a8; }
.axes { position: absolute; left: 4px; bottom: 4px; width: 80px; height: 80px; }
.eyes { position: absolute; right: 115px; bottom: 49px; display: flex; gap: 4px; }
.eyes i { width: 12px; height: 12px; border-radius: 50%; background: #b4b4b4; }
.eyes i + i { margin-top: 2px; }
.dock { flex: none; width: 15px; padding: 204px 0 0 4px; }
.dockbar { position: relative; height: 53px; padding-top: 3px; background: #f8f8f8; border: 1px solid #c4c4c4; border-right: 0; }
.dockbar button { width: 8px; height: 12px; display: grid; place-items: center; }
.dockbar svg { width: 9px; height: 9px; }
.gauge { position: absolute; right: 0; top: 9px; width: 4px; height: 31px; border-radius: 4px 0 0 4px; background: linear-gradient(#3a3a42 0 60%, #6fa23b 60%); }

/* layout tabs */
.layouts { flex: none; display: flex; height: 9px; margin: 0 15px 1px 26px; background: #f0f0f0; }
.pager { display: flex; width: 40px; background: #fff; }
.pager button { width: 10px; height: 8px; display: grid; place-items: center; border-right: 1px solid #ddd; }
.pager svg { width: 6px; height: 6px; fill: #111; }
.tab { height: 8px; width: 21px; margin-left: 1px; background: #fff; border: 1px solid #333; border-top: 0; transform: skewX(-20deg); line-height: 7px; }
.tab span { display: block; transform: skewX(20deg); }
.tab.on { width: 18px; background: #000; color: #fff; }

/* command window */
.command { flex: none; display: flex; height: 35px; padding: 4px 3px 6px 2px; border-top: 1px solid #9a9a9a; background: #f0f0f0; }
.lines { flex: 1; border: 1px solid #999; border-left: 3px double #aaa; background: #fff; font-family: "Liberation Mono", "Noto Sans CJK SC", monospace; font-size: 8px; line-height: 12px; padding-left: 2px; }
.lines p { height: 13px; border-bottom: 1px solid #bbb; }
.prompt { display: flex; height: 10px; }
.prompt input { flex: 1; min-width: 0; outline: 0; }
.spin { width: 12px; display: grid; place-items: center; background: #f6f6f6; border-top: 1px solid #999; }
.spin i { display: block; border: 2px solid transparent; }
.spin .up { border-bottom-color: #555; }
.spin .down { border-top-color: #555; }

/* overlays */
.balloon { position: absolute; right: 15px; bottom: 0; width: 98px; height: 46px; }
.balloon .shape { position: absolute; inset: 0; width: 98px; height: 47px; }
.balloon button { position: absolute; right: 5px; top: 4px; width: 9px; height: 9px; border: 1px solid #999; background: #eee; font-size: 7px; line-height: 7px; text-align: center; }
.balloon p { position: absolute; right: 4px; top: 15px; font-size: 7px; color: #111; white-space: nowrap; }
.brand { position: absolute; right: 55px; bottom: 14px; width: 180px; height: 85px; display: flex; align-items: center; gap: 11px; padding-left: 15px; background: #222f56; color: #c9ccd6; }
.mark { width: 36px; height: 38px; }
.words { display: flex; flex-direction: column; padding-bottom: 4px; }
.words strong { font: 700 26px/38px "Noto Sans CJK SC", sans-serif; }
.words span { font: 12px/14px "DejaVu Sans", sans-serif; }
```
